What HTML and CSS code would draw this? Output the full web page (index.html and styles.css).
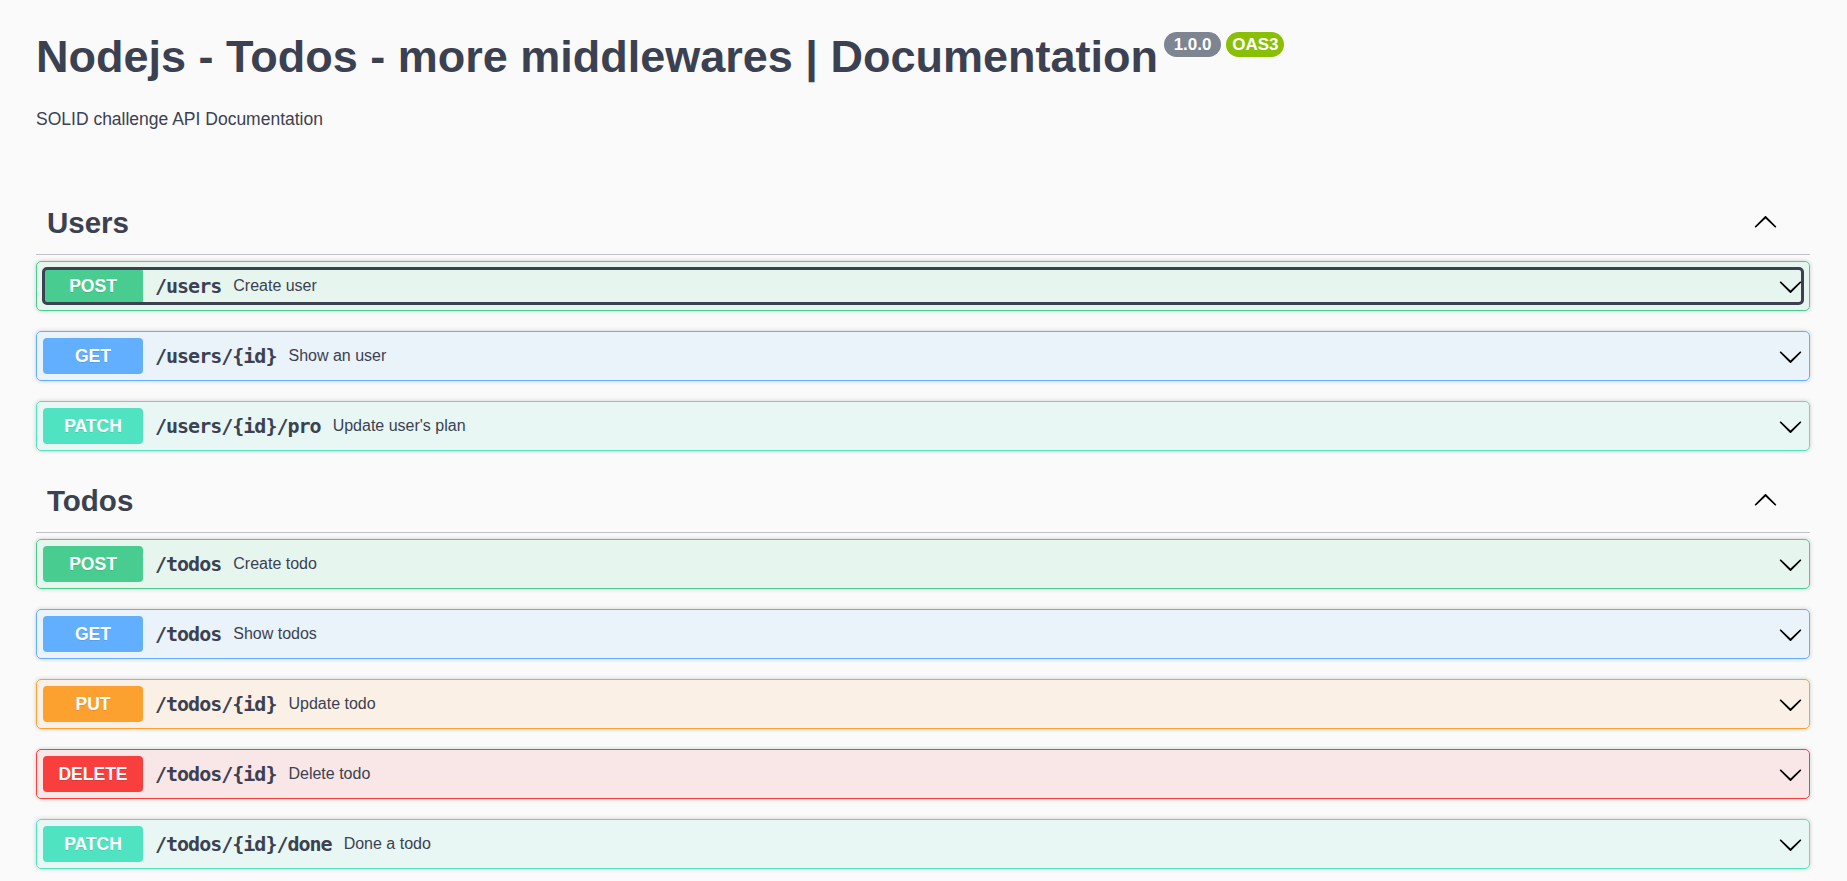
FILE: index.html
```html
<!DOCTYPE html>
<html lang="en">
<head>
<meta charset="utf-8">
<title>Swagger UI</title>
<link rel="stylesheet" href="styles.css">
</head>
<body>
<svg class="sprites" xmlns="http://www.w3.org/2000/svg" aria-hidden="true">
  <symbol id="large-arrow-down" viewBox="0 0 20 20">
    <path d="M17.418 6.109c.272-.268.709-.268.979 0s.271.701 0 .969l-7.908 7.83c-.27.268-.707.268-.979 0l-7.908-7.83c-.27-.268-.27-.701 0-.969.271-.268.709-.268.979 0L10 13.25l7.418-7.141z"/>
  </symbol>
  <symbol id="large-arrow-up" viewBox="0 0 20 20">
    <path d="M17.418 13.891c.272.268.709.268.979 0s.271-.701 0-.969l-7.908-7.83c-.27-.268-.707-.268-.979 0l-7.908 7.83c-.27.268-.27.701 0 .969.271.268.709.268.979 0L10 6.75l7.418 7.141z"/>
  </symbol>
</svg>
<div class="swagger-ui">
  <div class="wrapper">
    <section class="info">
      <h2 class="title"><span class="title-text">Nodejs - Todos - more middlewares | Documentation</span><span class="badges"><small class="version"> 1.0.0 </small><small class="version stamp">OAS3</small></span></h2>
      <p class="description">SOLID challenge API Documentation</p>
    </section>

    <section class="tags">
      <div class="tag-section">
        <h3 class="opblock-tag"><span class="tag-name">Users</span><button class="expand" type="button"><svg class="arrow"><use href="#large-arrow-up"/></svg></button></h3>
        <div class="opblock post">
          <div class="summary focused">
            <span class="method">POST</span>
            <span class="path">/users</span>
            <span class="desc">Create user</span>
            <svg class="arrow"><use href="#large-arrow-down"/></svg>
          </div>
        </div>
        <div class="opblock get">
          <div class="summary">
            <span class="method">GET</span>
            <span class="path">/users/{id}</span>
            <span class="desc">Show an user</span>
            <svg class="arrow"><use href="#large-arrow-down"/></svg>
          </div>
        </div>
        <div class="opblock patch">
          <div class="summary">
            <span class="method">PATCH</span>
            <span class="path">/users/{id}/pro</span>
            <span class="desc">Update user's plan</span>
            <svg class="arrow"><use href="#large-arrow-down"/></svg>
          </div>
        </div>
      </div>

      <div class="tag-section">
        <h3 class="opblock-tag"><span class="tag-name">Todos</span><button class="expand" type="button"><svg class="arrow"><use href="#large-arrow-up"/></svg></button></h3>
        <div class="opblock post">
          <div class="summary">
            <span class="method">POST</span>
            <span class="path">/todos</span>
            <span class="desc">Create todo</span>
            <svg class="arrow"><use href="#large-arrow-down"/></svg>
          </div>
        </div>
        <div class="opblock get">
          <div class="summary">
            <span class="method">GET</span>
            <span class="path">/todos</span>
            <span class="desc">Show todos</span>
            <svg class="arrow"><use href="#large-arrow-down"/></svg>
          </div>
        </div>
        <div class="opblock put">
          <div class="summary">
            <span class="method">PUT</span>
            <span class="path">/todos/{id}</span>
            <span class="desc">Update todo</span>
            <svg class="arrow"><use href="#large-arrow-down"/></svg>
          </div>
        </div>
        <div class="opblock delete">
          <div class="summary">
            <span class="method">DELETE</span>
            <span class="path">/todos/{id}</span>
            <span class="desc">Delete todo</span>
            <svg class="arrow"><use href="#large-arrow-down"/></svg>
          </div>
        </div>
        <div class="opblock patch">
          <div class="summary">
            <span class="method">PATCH</span>
            <span class="path">/todos/{id}/done</span>
            <span class="desc">Done a todo</span>
            <svg class="arrow"><use href="#large-arrow-down"/></svg>
          </div>
        </div>
      </div>
    </section>
  </div>
</div>
</body>
</html>
```

FILE: styles.css
```css
* {
  box-sizing: border-box;
}

html,
body {
  margin: 0;
  padding: 0;
}

body {
  background: #fafafa;
  color: #3b4151;
  font-family: "Liberation Sans", Arial, sans-serif;
}

.sprites {
  position: absolute;
  width: 0;
  height: 0;
  overflow: hidden;
}

.wrapper {
  padding: 0 37px 0 36px;
}

/* ---------- info ---------- */
.info {
  padding-top: 31px;
}

.title {
  display: flex;
  align-items: flex-start;
  margin: 0;
  font-size: 45px;
  line-height: 52px;
  font-weight: 700;
  color: #3b4151;
}

.badges {
  display: flex;
  gap: 5px;
  margin: 1px 0 0 6px;
}

.version {
  display: block;
  height: 25px;
  padding: 0 5px;
  border-radius: 57px;
  background: #7d8492;
  color: #fff;
  font-size: 17px;
  font-weight: 700;
  line-height: 25px;
  white-space: pre;
}

.version.stamp {
  padding: 0 6px;
  background: #89bf04;
}

.description {
  margin: 26px 0 0;
  font-size: 17.5px;
  line-height: 21px;
  color: #3b4151;
}

/* ---------- tags ---------- */
.tags {
  margin-top: 63px;
}

.opblock-tag {
  display: flex;
  align-items: center;
  margin: 0 0 6px;
  padding: 11px 32px 13px 11px;
  border-bottom: 1px solid rgba(59, 65, 81, 0.3);
  font-size: 29.5px;
  line-height: 37px;
  font-weight: 700;
  color: #3b4151;
}

.tag-name {
  flex: 1;
}

.expand {
  display: flex;
  padding: 0;
  border: 0;
  background: none;
}

.arrow {
  display: block;
  width: 25px;
  height: 25px;
  fill: #000;
  flex: none;
}

/* ---------- operations ---------- */
.opblock {
  margin: 0 0 20px;
  padding: 6px;
  border: 1px solid #000;
  border-radius: 5px;
  box-shadow: 0 0 4px rgba(0, 0, 0, 0.19);
}

.summary {
  display: flex;
  align-items: center;
  border-radius: 4px;
}

.summary.focused {
  outline: 3px solid #3b4151;
  outline-offset: -2px;
}

.method {
  flex: none;
  width: 100px;
  height: 36px;
  border-radius: 4px;
  color: #fff;
  font-size: 17.5px;
  font-weight: 700;
  line-height: 36px;
  text-align: center;
  text-shadow: 0 1px 0 rgba(0, 0, 0, 0.1);
}

.path {
  padding: 0 12px;
  font-family: "DejaVu Sans Mono", "Liberation Mono", monospace;
  font-size: 20px;
  font-weight: 700;
  letter-spacing: -1px;
  color: #3b4151;
}

.desc {
  flex: 1;
  font-size: 16px;
  color: #3b4151;
}

.opblock.post {
  border-color: #49cc90;
  background: rgba(73, 204, 144, 0.1);
}

.opblock.post .method {
  background: #49cc90;
}

.opblock.get {
  border-color: #61affe;
  background: rgba(97, 175, 254, 0.1);
}

.opblock.get .method {
  background: #61affe;
}

.opblock.put {
  border-color: #fca130;
  background: rgba(252, 161, 48, 0.1);
}

.opblock.put .method {
  background: #fca130;
}

.opblock.delete {
  border-color: #f93e3e;
  background: rgba(249, 62, 62, 0.1);
}

.opblock.delete .method {
  background: #f93e3e;
}

.opblock.patch {
  border-color: #50e3c2;
  background: rgba(80, 227, 194, 0.1);
}

.opblock.patch .method {
  background: #50e3c2;
}
```
